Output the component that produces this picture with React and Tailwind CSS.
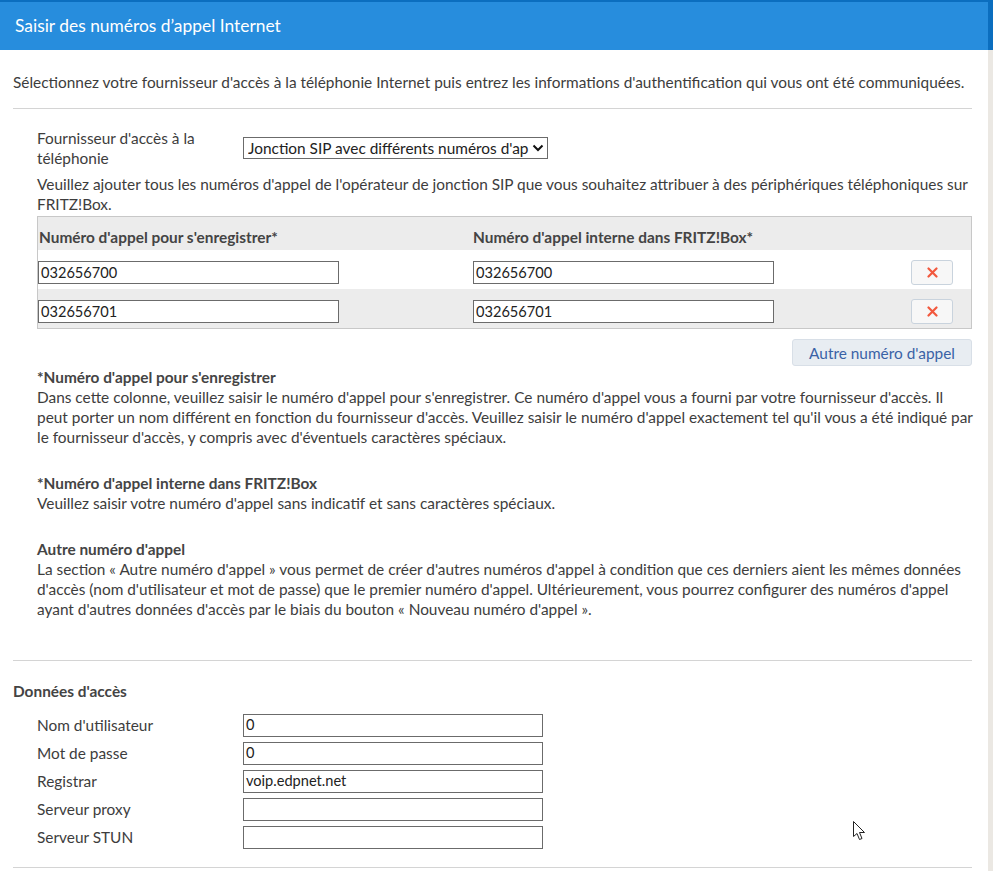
import React from "react";

const font = { fontFamily: "Lato, 'Noto Sans', sans-serif" };

function TextInput({ value, className = "" }) {
  return (
    <div
      className={
        "h-[23px] border border-[#6b6b6b] bg-white flex items-center pl-[2px] text-[14.6px] text-[#222] " +
        className
      }
    >
      {value}
    </div>
  );
}

function DeleteBtn() {
  return (
    <div className="w-[42px] h-[25px] rounded-[3px] border border-[#c9d3dd] bg-[#f7f7f7] flex items-center justify-center">
      <svg width="11" height="11" viewBox="0 0 11 11">
        <path d="M1.5 1.5 L9.5 9.5 M9.5 1.5 L1.5 9.5" stroke="#f2583d" strokeWidth="2.2" strokeLinecap="round" />
      </svg>
    </div>
  );
}

function Lines({ lines }) {
  return (
    <div>
      {lines.map((l) => (
        <div key={l} className="whitespace-nowrap">
          {l}
        </div>
      ))}
    </div>
  );
}

export default function App() {
  return (
    <div className="w-[993px] h-[871px] overflow-hidden relative text-[#3d3d3d] text-[15.4px] leading-[20px]" style={font}>
      {/* header */}
      <div className="flex h-[50px] bg-[#0b6ebf] pt-[2px] pr-[5px]">
        <div className="flex-1 bg-[#278ddd] flex items-center pl-[15px] text-white text-[17.4px]">
          Saisir des numéros d’appel Internet
        </div>
      </div>
      <div className="flex">
        <div className="w-[988px] bg-white pl-[13px] pr-[16px] pb-[40px]">
          <div className="pt-[22px] pb-[16px] border-b border-[#d4d4d4] whitespace-nowrap">
            Sélectionnez votre fournisseur d'accès à la téléphonie Internet puis entrez les informations d'authentification qui vous ont été communiquées.
          </div>

          <div className="pl-[24px]">
            <div className="flex items-start pt-[19px]">
              <div className="w-[206px] pr-[12px]">Fournisseur d'accès à la téléphonie</div>
              <div className="mt-[9px] w-[305px] h-[22px] border border-[#6b6b6b] flex items-center pl-[4px] pr-[3px] text-[#222]">
                <span className="flex-1 whitespace-nowrap overflow-hidden">Jonction SIP avec différents numéros d'ap</span>
                <svg width="12" height="10" viewBox="0 0 12 10" className="ml-[2px]">
                  <path d="M1.5 2.5 L6 7 L10.5 2.5" fill="none" stroke="#111" strokeWidth="2" />
                </svg>
              </div>
            </div>
            <div className="mt-[6px]">
              <Lines
                lines={[
                  "Veuillez ajouter tous les numéros d'appel de l'opérateur de jonction SIP que vous souhaitez attribuer à des périphériques téléphoniques sur",
                  "FRITZ!Box.",
                ]}
              />
            </div>

            {/* table */}
            <div className="mt-[2px] border border-[#c8c8c8]">
              <div className="h-[33px] bg-[#ececec] flex items-end pb-[3px] font-bold text-[#444]">
                <div className="w-[435px] pl-[1px]">Numéro d'appel pour s'enregistrer*</div>
                <div>Numéro d'appel interne dans FRITZ!Box*</div>
              </div>
              {[
                ["032656700", "bg-white"],
                ["032656701", "bg-[#ececec]"],
              ].map(([v, bg]) => (
                <div key={v} className={"h-[39px] flex items-end pb-[4px] " + bg}>
                  <div className="w-[435px] mb-[1px]">
                    <TextInput value={v} className="w-[301px]" />
                  </div>
                  <TextInput value={v} className="w-[301px] mb-[1px]" />
                  <div className="ml-[137px]">
                    <DeleteBtn />
                  </div>
                </div>
              ))}
            </div>

            <div className="flex justify-end mt-[10px]">
              <div className="w-[180px] h-[27px] rounded-[3px] border border-[#d8dfe7] bg-[#e8edf2] text-[#3a62a6] flex items-center justify-center">
                Autre numéro d'appel
              </div>
            </div>

            <div className="mt-[1px]">
              <div className="font-bold text-[#444]">*Numéro d'appel pour s'enregistrer</div>
              <Lines
                lines={[
                  "Dans cette colonne, veuillez saisir le numéro d'appel pour s'enregistrer. Ce numéro d'appel vous a fourni par votre fournisseur d'accès. Il",
                  "peut porter un nom différent en fonction du fournisseur d'accès. Veuillez saisir le numéro d'appel exactement tel qu'il vous a été indiqué par",
                  "le fournisseur d'accès, y compris avec d'éventuels caractères spéciaux.",
                ]}
              />
            </div>
            <div className="mt-[26px]">
              <div className="font-bold text-[#444]">*Numéro d'appel interne dans FRITZ!Box</div>
              <div>Veuillez saisir votre numéro d'appel sans indicatif et sans caractères spéciaux.</div>
            </div>
            <div className="mt-[26px]">
              <div className="font-bold text-[#444]">Autre numéro d'appel</div>
              <Lines
                lines={[
                  "La section « Autre numéro d'appel » vous permet de créer d'autres numéros d'appel à condition que ces derniers aient les mêmes données",
                  "d'accès (nom d'utilisateur et mot de passe) que le premier numéro d'appel. Ultérieurement, vous pourrez configurer des numéros d'appel",
                  "ayant d'autres données d'accès par le biais du bouton « Nouveau numéro d'appel ».",
                ]}
              />
            </div>
          </div>

          <div className="mt-[41px] border-t border-[#d4d4d4] pt-[20px]">
            <div className="font-bold text-[#444]">Données d'accès</div>
            <div className="pl-[24px] pt-[10px] pb-[16px] border-b border-[#d4d4d4]">
              {[
                ["Nom d'utilisateur", "0"],
                ["Mot de passe", "0"],
                ["Registrar", "voip.edpnet.net"],
                ["Serveur proxy", ""],
                ["Serveur STUN", ""],
              ].map(([l, v]) => (
                <div key={l} className="h-[28px] flex items-center">
                  <div className="w-[206px]">{l}</div>
                  <TextInput value={v} className="w-[300px] h-[22px]" />
                </div>
              ))}
            </div>
          </div>
        </div>
        <div className="w-[5px] bg-[#ebe8e3]" />
      </div>

      {/* mouse cursor */}
      <svg className="absolute left-[853px] top-[821px]" width="13" height="20" viewBox="0 0 13 20">
        <path d="M0.5 0.5 L0.5 15.5 L4 12.5 L6.5 18.5 L9 17.5 L6.5 11.5 L11.5 11.5 Z" fill="white" stroke="#222" strokeWidth="1" strokeLinejoin="miter" />
      </svg>
    </div>
  );
}
